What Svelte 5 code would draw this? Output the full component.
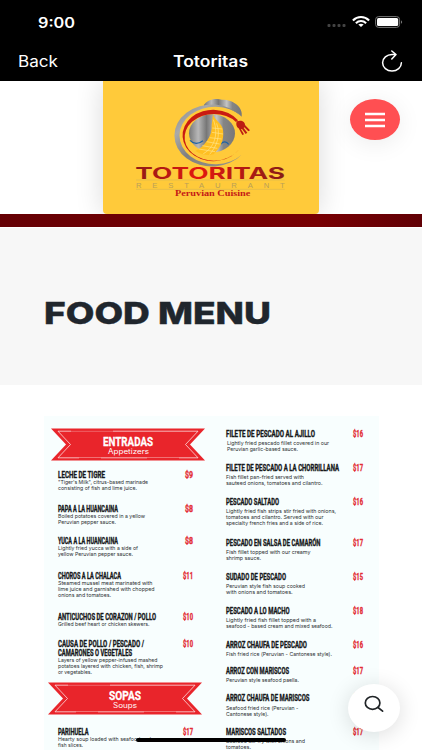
<script>

const starters = [
    { title: [['LECHE DE TIGRE', 47]], price: '$9', height: 34, lines: [['"Tiger\'s Milk", citrus-based marinade', 90], ['consisting of fish and lime juice.', 79]] },
    { title: [['PAPA A LA HUANCAINA', 60]], price: '$8', height: 32.7, lines: [['Boiled potatoes covered in a yellow', 87], ['Peruvian pepper sauce.', 58]] },
    { title: [['YUCA A LA HUANCAINA', 60]], price: '$8', height: 34.3, lines: [['Lightly fried yucca with a side of', 80], ['yellow Peruvian pepper sauce.', 75]] },
    { title: [['CHOROS A LA CHALACA', 63]], price: '$11', height: 41.2, lines: [['Steamed mussel meat marinated with', 94.5], ['lime juice and garnished with chopped', 96.5], ['onions and tomatoes.', 53]] },
    { title: [['ANTICUCHOS DE CORAZON / POLLO', 98]], price: '$10', height: 27.6, lines: [['Grilled beef heart or chicken skewers.', 91.5]] },
    { title: [['CAUSA DE POLLO / PESCADO /', 86], ['CAMARONES O VEGETALES', 74]], price: '$10', height: 42.4, lines: [['Layers of yellow pepper-infused mashed', 99.5], ['potatoes layered with chicken, fish, shrimp', 105], ['or vegetables.', 34]] }
];

const soups = [
    { title: [['PARIHUELA', 30.5]], price: '$17', height: 24, lines: [['Hearty soup loaded with seafood and', 93], ['fish slices.', 25]] }
];

const fish = [
    { title: [['FILETE DE PESCADO AL AJILLO', 89]], price: '$16', height: 34, indent: 1, lines: [['Lightly fried pescado fillet covered in our', 102], ['Peruvian garlic-based sauce.', 71]] },
    { title: [['FILETE DE PESCADO A LA CHORRILLANA', 113]], price: '$17', height: 34, lines: [['Fish fillet pan-fried served with', 78], ['sauteed onions, tomatoes and cilantro.', 96.5]] },
    { title: [['PESCADO SALTADO', 53]], price: '$16', height: 41, lines: [['Lightly fried fish strips stir fried with onions,', 110], ['tomatoes and cilantro. Served with our', 97.5], ['specialty french fries and a side of rice.', 97]] },
    { title: [['PESCADO EN SALSA DE CAMARÓN', 94.5]], price: '$17', height: 34, lines: [['Fish fillet topped with our creamy', 84.5], ['shrimp sauce.', 35]] },
    { title: [['SUDADO DE PESCADO', 60]], price: '$15', height: 33.7, lines: [['Peruvian style fish soup cooked', 79], ['with onions and tomatoes.', 66.5]] },
    { title: [['PESCADO A LO MACHO', 63.5]], price: '$18', height: 34.3, lines: [['Lightly fried fish fillet topped with a', 90], ['seafood - based cream and mixed seafood.', 106.5]] },
    { title: [['ARROZ CHAUFA DE PESCADO', 81]], price: '$16', height: 26, lines: [['Fish fried rice (Peruvian - Cantonese style).', 106]] },
    { title: [['ARROZ CON MARISCOS', 63]], price: '$17', height: 27.3, lines: [['Peruvian style seafood paella.', 73]] },
    { title: [['ARROZ CHAUFA DE MARISCOS', 83.5]], price: '$17', height: 33.7, lines: [['Seafood fried rice (Peruvian -', 72.5], ['Cantonese style).', 42.5]] },
    { title: [['MARISCOS SALTADOS', 60]], price: '$17', height: 24, lines: [['Seafood stir fry with onions and', 79], ['tomatoes.', 25]] }
];

// how much each kind of text is condensed horizontally
const squeeze = { name: 1.55, price: 1.5, heading: 1.35 };

</script>

{#snippet fit(text, width, height, base, cls)}
    {@const span = width * (squeeze[cls] ?? 1)}
    <svg class="fit {cls}" {width} {height} viewBox="0 0 {span} {height}" preserveAspectRatio="none"><text y={base} textLength={span} lengthAdjust="spacingAndGlyphs">{text}</text></svg>
{/snippet}

{#snippet dish(item)}
    <div class="dish" style="height: {item.height}px">
        <div class="about">
            {#each item.title as [text, width]}
                {@render fit(text, width, 9, 8, 'name')}
            {/each}
            <div class="lines" style="padding-left: {item.indent ?? 0}px">
                {#each item.lines as [text, width]}
                    {@render fit(text, width, 6, 5.3, 'desc')}
                {/each}
            </div>
        </div>
        {@render fit(item.price, item.price.length > 2 ? 10 : 8, 9, 8, 'price')}
    </div>
{/snippet}

{#snippet banner(title, titleWidth, sub, subWidth)}
    <div class="banner">
        <svg class="ribbon" width="154" height="33" viewBox="0 0 154 33">
            <path d="M0 .5H154L139 16.5 154 32.5H0L15 16.5Z" fill="#e9252b"/>
            <path d="M7 3.2H147L134.5 16.5 147 29.8H7L19.5 16.5Z" fill="none" stroke="#fff" stroke-width=".8" opacity=".85"/>
            <path d="M20 2.8H62M96 30.4H128M28 30.4H50" stroke="#e9252b" stroke-width="1.2"/>
        </svg>
        <div class="words">
            {@render fit(title, titleWidth, 13, 12, 'heading')}
            {@render fit(sub, subWidth, 9, 6.8, 'sub')}
        </div>
    </div>
{/snippet}

<div class="screen">
    <div class="status">
        {@render fit('9:00', 37, 20, 16.5, 'time')}
        <div class="signals">
            <svg width="20" height="14" viewBox="0 0 20 14" fill="#444">
                <rect x=".5" y="9" width="3" height="3" rx="1"/><rect x="5.5" y="9" width="3" height="3" rx="1"/><rect x="10.5" y="9" width="3" height="3" rx="1"/><rect x="15.5" y="9" width="3" height="3" rx="1"/>
            </svg>
            <svg width="18" height="14" viewBox="0 0 18 14" fill="none" stroke="#fff" stroke-width="2.1">
                <path d="M.9 5.5C5.5.9 12.5.9 17.1 5.5M3.9 8.2C6.8 5.3 11.2 5.3 14.1 8.2"/>
                <path d="M9 12 6.3 9.6Q9 7.8 11.7 9.6Z" fill="#fff" stroke="none"/>
            </svg>
            <svg width="28" height="14" viewBox="0 0 28 14">
                <rect x=".6" y="1.6" width="24" height="10.8" rx="3" fill="none" stroke="#777"/>
                <rect x="2" y="3" width="21.2" height="8" rx="1.6" fill="#fff"/>
                <path d="M26 5.2Q28.3 7 26 8.8Z" fill="#777"/>
            </svg>
        </div>
    </div>

    <div class="nav">
        {@render fit('Back', 40, 24, 17.3, 'back')}
        {@render fit('Totoritas', 75, 24, 17.3, 'app-title')}
        <svg class="reload" width="22" height="22" viewBox="0 0 22 22" fill="none" stroke="#fff" stroke-width="1.5" stroke-linecap="round" stroke-linejoin="round">
            <path d="M14.7 4.4H11A9.4 8.3 0 1 0 20.4 12.7M10.8 1 15 4.5 10.8 9"/>
        </svg>
    </div>

    <div class="site-header">
        <div class="logo">
            <svg width="216" height="133" viewBox="9 9 648 399">
                <defs>
                    <linearGradient id="steel">
                        <stop offset="0" stop-color="#777"/><stop offset=".2" stop-color="#b8b8b8"/><stop offset=".38" stop-color="#777"/><stop offset=".6" stop-color="#c4c4c4"/><stop offset=".75" stop-color="#858585"/><stop offset="1" stop-color="#777"/>
                    </linearGradient>
                    <linearGradient id="plate" x1="0" y1="0" x2="1" y2="1">
                        <stop offset="0" stop-color="#858585"/><stop offset=".25" stop-color="#aaa"/><stop offset=".5" stop-color="#808080"/><stop offset="1" stop-color="#999688"/>
                    </linearGradient>
                    <linearGradient id="ruby">
                        <stop offset="0" stop-color="#8e1b17"/><stop offset=".42" stop-color="#e3170f"/><stop offset="1" stop-color="#861c17"/>
                    </linearGradient>
                </defs>
                <path d="M312 80C326 62 350 61 366 65 402 65 430 88 425 116 397 89 358 80 312 86Z" fill="url(#steel)"/>
                <path d="M425 115A113 93 0 1 0 425 230A107 86 0 1 1 425 115Z" fill="url(#plate)"/>
                <ellipse cx="336" cy="166" rx="69" ry="57" fill="url(#steel)"/>
                <path d="M270 187Q287 205 309 188M362 198Q375 185 386 199" fill="none" stroke="#1d62a5" stroke-width="4"/>
                <path d="M339 109C344 126 365 136 369 155 374 190 358 211 341 229Q313 235 286 219C311 207 338 176 335 141Z" fill="#ffbf22"/>
                <path d="M340 125C358 172 340 211 310 227M350 136C363 172 350 205 329 229M337 150 367 153M336 163 369 168M329 179 365 183M320 191 359 198M307 203 352 211M296 213 345 221" fill="none" stroke="#ffe58c" stroke-width="2"/>
                <path d="M414 127A92 77 0 1 0 420 210A88 70 0 1 1 408 132Z" fill="#c91b12"/>
                <path d="M411 130C424 124 436 132 435 141L450 157 445 160 433 148 431 150 442 164 437 168 426 153 423 154 432 169 427 171 416 151C409 148 407 136 411 130Z" fill="#bc1d13"/>
                <text class="brand" x="106" y="302" textLength="449" lengthAdjust="spacingAndGlyphs" fill="url(#ruby)">TOTORITAS</text>
                <path d="M108 306H554M108 334H554" stroke="#b9a468" stroke-width="1.5" opacity=".65"/>
                <text class="restaurant" x="108" y="329" textLength="446">RESTAURANT</text>
                <text class="cuisine" x="225" y="355" textLength="226" lengthAdjust="spacingAndGlyphs">Peruvian Cuisine</text>
            </svg>
        </div>
        <div class="menu-button">
            <svg width="20" height="16" viewBox="0 0 20 16"><path d="M0 2H20M0 8H20M0 14H20" stroke="#fff" stroke-width="2.4"/></svg>
        </div>
    </div>
    <div class="stripe"></div>

    <div class="hero">
        {@render fit('FOOD MENU', 227, 32, 27, 'page-title')}
    </div>

    <div class="board">
        <div class="left">
            {@render banner('ENTRADAS', 50, 'Appetizers', 41)}
            <div class="group">
                {#each starters as item}
                    {@render dish(item)}
                {/each}
            </div>
            <div class="second">
                {@render banner('SOPAS', 32, 'Soups', 24)}
            </div>
            <div class="group late">
                {#each soups as item}
                    {@render dish(item)}
                {/each}
            </div>
        </div>
        <div class="right">
            {#each fish as item}
                {@render dish(item)}
            {/each}
        </div>
    </div>

    <div class="search">
        <svg width="20" height="18" viewBox="0 0 20 18" fill="none" stroke="#202427" stroke-width="1.7" stroke-linecap="round">
            <ellipse cx="8.6" cy="7.9" rx="7.3" ry="6.4"/><path d="M14 12.5 18.6 16.2"/>
        </svg>
    </div>
    <div class="home-bar"></div>
</div>

<style>
    :global(body) {
        background: #fff;
        overflow: hidden;
    }

    .screen {
        position: relative;
        width: 422px;
        height: 750px;
        overflow: hidden;
        background: #fff;
        font-family: Inter, "Liberation Sans", sans-serif;
    }

    svg {
        display: block;
        flex: none;
    }

    .fit {
        overflow: visible;
    }

    .status {
        box-sizing: border-box;
        height: 44px;
        padding: 11px 19px 0 38px;
        background: #000;
        display: flex;
        justify-content: space-between;
    }

    .time {
        font-size: 14.4px;
        font-weight: 600;
        fill: #fff;
    }

    .signals {
        display: flex;
        gap: 5px;
        padding-top: 4px;
    }

    .nav {
        box-sizing: border-box;
        position: relative;
        z-index: 2;
        height: 37px;
        padding: 6px 19px 0 18px;
        background: #000;
        display: grid;
        grid-template-columns: 1fr 75px 1fr;
    }

    .back, .app-title {
        font-size: 15.6px;
        fill: #fff;
    }

    .app-title {
        font-weight: 600;
    }

    .reload {
        justify-self: end;
    }

    .site-header {
        position: relative;
        height: 133px;
        display: grid;
        grid-template-columns: 103px 216px 1fr;
        overflow: hidden;
    }

    .logo {
        grid-column: 2;
        background: #ffca3a;
        border-radius: 0 0 4px 4px;
        box-shadow: 0 0 28px rgba(0, 0, 0, 0.15);
    }

    .brand {
        font-family: Inter, sans-serif;
        font-size: 47px;
        font-weight: bold;
    }

    .restaurant {
        font-family: "Liberation Sans", sans-serif;
        font-size: 23px;
        fill: #b99f59;
    }

    .cuisine {
        font-family: "Liberation Serif", serif;
        font-size: 22px;
        font-weight: bold;
        fill: #c51a16;
    }

    .menu-button {
        width: 50px;
        height: 41px;
        margin: 18px 0 0 31px;
        border-radius: 50%;
        background: #ff4f52;
        box-shadow: 0 4px 24px rgba(0, 0, 0, 0.08);
        display: flex;
        align-items: center;
        justify-content: center;
    }

    .stripe {
        height: 13px;
        background: linear-gradient(90deg, #650004, #740004 50%, #780003 75%, #610005);
    }

    .hero {
        box-sizing: border-box;
        height: 157px;
        margin-top: 1px;
        padding: 69px 0 0 44px;
        background: #f7f7f7;
    }

    .page-title {
        font-size: 30.3px;
        font-weight: 800;
        fill: #20262d;
        stroke: #20262d;
        stroke-width: 0.4px;
    }

    .board {
        box-sizing: border-box;
        width: 335px;
        height: 340px;
        margin: 31px 0 0 44px;
        background: #f8fefe;
        display: grid;
        grid-template-columns: 182px 137px;
    }

    .left {
        padding: 11.6px 0 0 7px;
    }

    .right {
        padding-top: 13px;
    }

    .banner {
        width: 154px;
        height: 33px;
        display: grid;
    }

    .banner > * {
        grid-area: 1 / 1;
    }

    .words {
        display: flex;
        flex-direction: column;
        align-items: center;
        padding-top: 6px;
    }

    .heading {
        font-family: Roboto, sans-serif;
        font-size: 13.4px;
        font-weight: bold;
        fill: #fff;
        stroke: #fff;
        stroke-width: 0.3px;
    }

    .sub {
        font-size: 7.2px;
        fill: #fff;
    }

    .group {
        width: 135px;
        padding: 9px 0 0 6.7px;
    }

    .second {
        margin: 0 0 0 -3.3px;
    }

    .group.late {
        padding-top: 12.6px;
    }

    .dish {
        display: flex;
        justify-content: space-between;
    }

    .name, .price {
        font-family: Roboto, sans-serif;
        font-size: 9px;
        font-weight: bold;
        fill: #17191b;
        stroke: #17191b;
        stroke-width: 0.35px;
    }

    .price {
        fill: #e32b34;
        stroke: #e32b34;
    }

    .desc {
        font-size: 5.4px;
        fill: #2c3032;
    }

    .right .lines {
        padding-top: 2.4px;
    }

    .search {
        position: absolute;
        left: 348px;
        top: 684px;
        box-sizing: border-box;
        width: 52px;
        height: 48px;
        padding-bottom: 9px;
        border-radius: 50%;
        background: #fff;
        box-shadow: 0 3px 22px rgba(0, 0, 0, 0.14);
        display: flex;
        align-items: center;
        justify-content: center;
    }

    .home-bar {
        position: absolute;
        left: 136px;
        top: 738px;
        width: 150px;
        height: 4px;
        border-radius: 2px;
        background: #000;
    }
</style>
